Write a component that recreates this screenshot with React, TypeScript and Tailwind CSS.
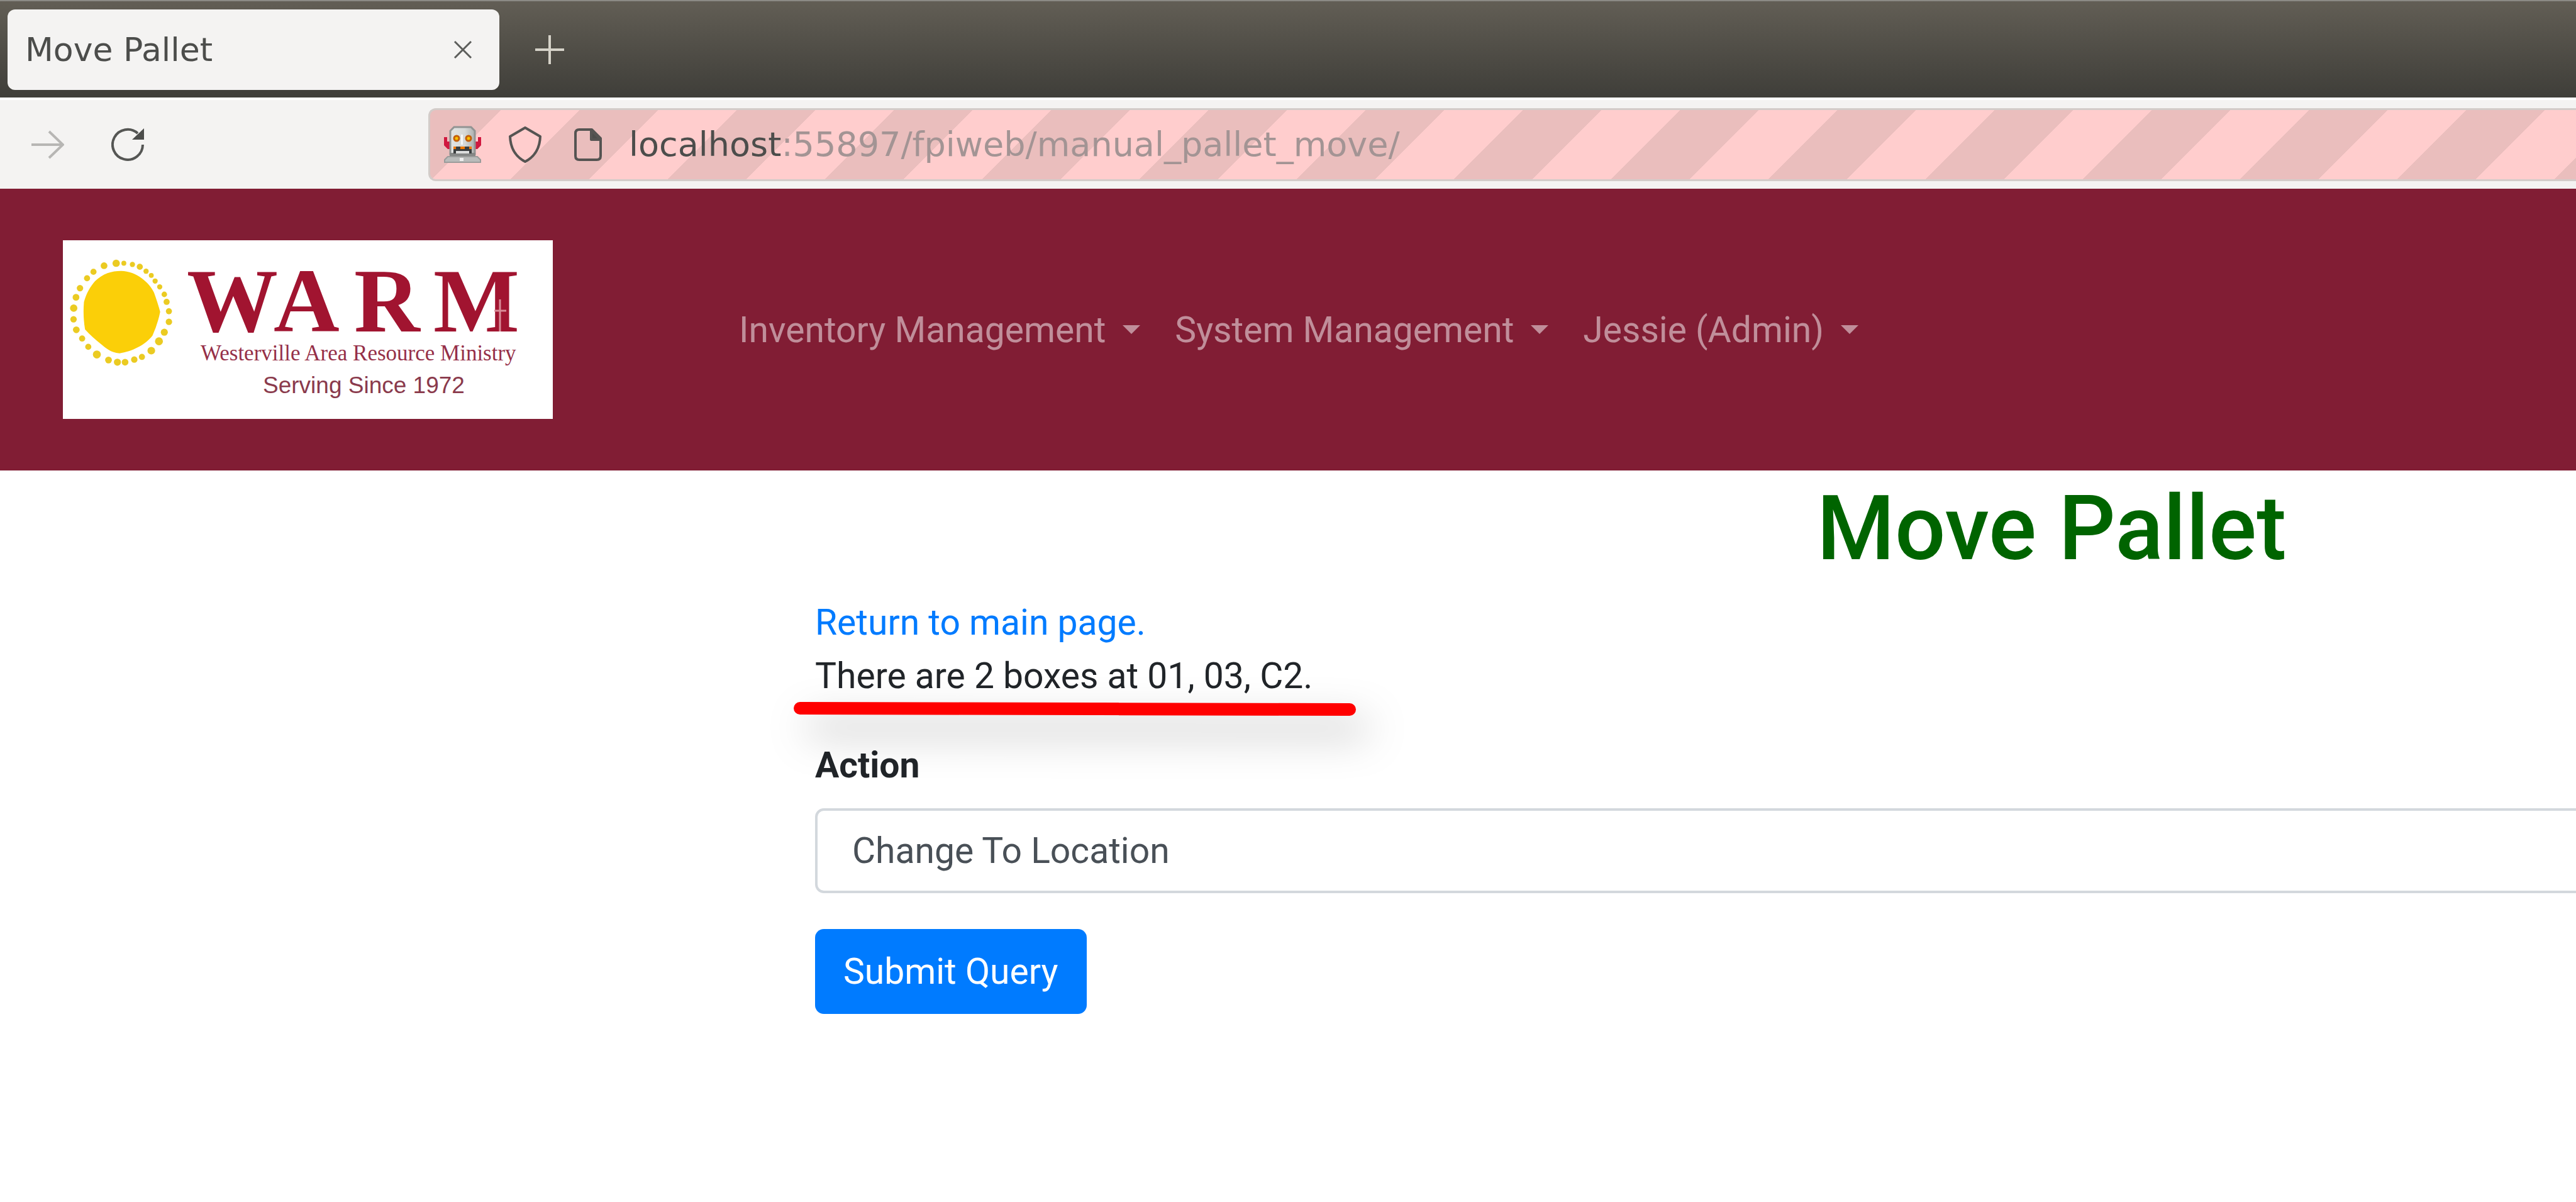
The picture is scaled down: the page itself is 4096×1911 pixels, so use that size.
import React from "react";

const NAV_ITEMS = ["Inventory Management", "System Management", "Jessie (Admin)"];

function TabStrip() {
  return (
    <div className="flex h-[155px] items-center border-t-2 border-[#8b8a85] bg-linear-to-b from-[#625e55] to-[#3f3e39] pl-3 font-['DejaVu_Sans',sans-serif]">
      <div className="flex h-32 w-[782px] items-center justify-between rounded-xl bg-[#f4f3f2] pr-[43px] pl-7">
        <span className="text-[52px] leading-none text-[#4c4d4b]">Move Pallet</span>
        <button aria-label="Close tab">
          <svg className="h-[30px] w-[30px]" viewBox="0 0 30 30" fill="none" stroke="#5c5d5b" strokeWidth="3">
            <path d="M2 2L28 28M28 2L2 28" />
          </svg>
        </button>
      </div>
      <button aria-label="New tab" className="ml-[57px]">
        <svg className="h-[46px] w-[46px]" viewBox="0 0 46 46" fill="none" stroke="#d6d3c9" strokeWidth="4">
          <path d="M23 0V46M0 23H46" />
        </svg>
      </button>
    </div>
  );
}

function Robot() {
  return (
    <svg className="h-[60px] w-[60px]" viewBox="0 0 60 60">
      <defs>
        <linearGradient id="metal" x1="0" x2="1" y1="0" y2="0">
          <stop offset="0" stopColor="#e2e4e3" />
          <stop offset="0.6" stopColor="#d6d8d7" />
          <stop offset="1" stopColor="#adafae" />
        </linearGradient>
      </defs>
      <path d="M0 18H5V25H9V37H6L0 31ZM59 18H54V25H50V37H53L59 31Z" fill="#d0183f" />
      <path d="M16 2H43L49 8V45H10V8Z" fill="url(#metal)" stroke="#929493" strokeWidth="3" />
      <path d="M9 43H50V50H9Z" fill="#858786" />
      <path d="M6 49H53L58 54V58H1V54Z" fill="#b9bbba" stroke="#9a9c9b" strokeWidth="2" />
      <path d="M27 14H30V30H27Z" fill="#f8f8f8" />
      <circle cx="20" cy="20" r="4" fill="#f9c000" stroke="#c4600c" strokeWidth="3" />
      <circle cx="39" cy="20" r="4" fill="#f9c000" stroke="#c4600c" strokeWidth="3" />
      <path d="M15 33H44V44H15Z" fill="#3a3d3e" />
      <path d="M15 33H19V37H15ZM26 33H33V37H26ZM40 33H44V37H40Z" fill="#f07800" />
      <path d="M19 40H40V44H19Z" fill="#dcdddd" />
      <path d="M25 51H31V56H25Z" fill="#eeeeee" />
    </svg>
  );
}

function Toolbar() {
  return (
    <div className="flex h-[145px] items-center border-t-4 border-white bg-[#f4f3f2] pl-[50px]">
      <button aria-label="Forward">
        <svg className="h-[46px] w-[52px]" viewBox="0 0 52 46" fill="none" stroke="#b7b6b4" strokeWidth="4">
          <path d="M0 23H50M28 2L50 23L28 44" />
        </svg>
      </button>
      <button aria-label="Reload" className="ml-[75px]">
        <svg className="h-[54px] w-[54px]" viewBox="0 0 54 54" fill="none" stroke="#555654" strokeWidth="4">
          <path d="M50 27A24 24 0 1 1 42 9" />
          <path d="M52 1V19H33Z" fill="#4c4d4b" stroke="none" />
        </svg>
      </button>
      <div className="ml-[450px] flex h-[116px] min-w-0 flex-1 items-center rounded-l-xl border-y-3 border-l-3 border-[#d3ccc9] bg-[linear-gradient(135deg,#eabebd_25%,#ffcdcd_25%,#ffcdcd_50%,#eabebd_50%,#eabebd_75%,#ffcdcd_75%)] bg-[length:250px_250px] bg-[position:-10px_-3px] pl-[22px]">
        <Robot />
        <svg className="ml-[42px] h-[60px] w-[54px]" viewBox="0 0 54 60" fill="none" stroke="#555452" strokeWidth="4" strokeLinejoin="round">
          <path d="M27 3L51 17Q50 45 27 57Q4 45 3 17Z" />
        </svg>
        <svg className="ml-[50px] h-[54px] w-[46px]" viewBox="0 0 46 54" fill="none" stroke="#555452" strokeWidth="4" strokeLinejoin="round">
          <path d="M9 3H29L43 17V45Q43 51 37 51H9Q3 51 3 45V9Q3 3 9 3Z" />
          <path d="M28 4V19H43Z" fill="#4c4d4b" />
        </svg>
        <div className="ml-[42px] font-['DejaVu_Sans',sans-serif] text-[54px] leading-none whitespace-nowrap text-[#a39494]">
          <span className="text-[#4c4d4b]">localhost</span>:55897/fpiweb/manual_pallet_move/
        </div>
      </div>
    </div>
  );
}

const RAYS = [
  [368, 158, 24], [418, 158, 16], [474, 166, 17], [522, 181, 20], [563, 210, 17], [597, 237, 16],
  [622, 274, 17], [652, 312, 17], [682, 361, 18], [697, 410, 20], [712, 471, 20], [712, 540, 21],
  [682, 608, 23], [647, 667, 26], [597, 728, 25], [536, 769, 20], [486, 786, 21], [426, 803, 22],
  [376, 803, 23], [318, 789, 22], [242, 753, 26], [186, 703, 20], [146, 649, 20], [108, 592, 22],
  [90, 523, 21], [91, 451, 24], [106, 380, 22], [132, 320, 21], [178, 256, 20], [220, 214, 20],
  [289, 174, 22],
];

function Logo() {
  return (
    <svg className="h-[284px] w-[779px] bg-white" viewBox="0 0 779 284" role="img" aria-label="WARM">
      <g transform="translate(-5 -2) scale(0.2438)">
        <path
          d="M400 208C500 208 590 290 615 350Q640 420 655 475Q640 550 605 630C560 690 470 735 390 745C330 740 300 710 275 690Q210 640 165 590Q150 500 158 410C175 350 200 310 230 275C280 225 340 208 400 208Z"
          fill="#fbcf08"
        />
        {RAYS.map(([x, y, r]) => (
          <circle key={`${x}-${y}`} cx={x} cy={y} r={r} fill="#ebcb22" />
        ))}
      </g>
      <g fill="#a11430">
        <text x="197 335 463 589" y="145" fontFamily="Liberation Serif, serif" fontWeight="700" fontSize="145">WARM</text>
        <text x="219" y="191" fontFamily="Liberation Serif, serif" fontSize="35" fill="#963048">Westerville Area Resource Ministry</text>
        <text x="318" y="243" fontFamily="Liberation Sans, sans-serif" fontSize="37" fill="#8a3a4c">Serving Since 1972</text>
      </g>
      <path d="M695 94V145M686 112H705" stroke="#d98c98" strokeWidth="3" />
    </svg>
  );
}

function Navbar() {
  return (
    <nav className="flex h-[448px] items-center bg-[#811d34] pl-[100px]">
      <a href="#home">
        <Logo />
      </a>
      <div className="ml-[296px] flex gap-[55px]">
        {NAV_ITEMS.map((item) => (
          <button key={item} className="flex items-center whitespace-nowrap text-white/50">
            {item}
            <span className="ml-[27px] border-x-14 border-t-14 border-x-transparent" />
          </button>
        ))}
      </div>
    </nav>
  );
}

export default function App() {
  return (
    <div className="min-h-screen overflow-hidden bg-white font-[Roboto,sans-serif] text-[57px] leading-[85px] text-[#212529]">
      <TabStrip />
      <Toolbar />
      <Navbar />
      <main className="ml-[1296px] w-[96%]">
        <h1 className="pt-2 text-center text-[142px] leading-[170px] font-medium text-[#006400]">Move Pallet</h1>
        <a href="#main" className="mt-[21px] block text-[#007bff]">Return to main page.</a>
        <div className="relative">
          There are 2 boxes at 01, 03, C2.
          <svg className="absolute top-[84px] left-[-35px] h-[22px] w-[896px] overflow-visible drop-shadow-[20px_30px_32px_rgba(0,0,0,0.3)]" viewBox="0 0 896 22">
            <path d="M11 10L885 12" stroke="#ff0000" strokeWidth="20" strokeLinecap="round" />
          </svg>
        </div>
        <form className="mt-[57px]">
          <label htmlFor="action" className="block font-bold">Action</label>
          <select id="action" className="mt-[26px] block h-[135px] w-full appearance-none rounded-[14px] border-4 border-[#d3d8dd] bg-white pl-[55px] text-[#495057]">
            <option>Change To Location</option>
          </select>
          <button type="button" className="mt-[57px] h-[135px] rounded-[14px] bg-[#007bff] px-[45px] text-white">Submit Query</button>
        </form>
      </main>
    </div>
  );
}
